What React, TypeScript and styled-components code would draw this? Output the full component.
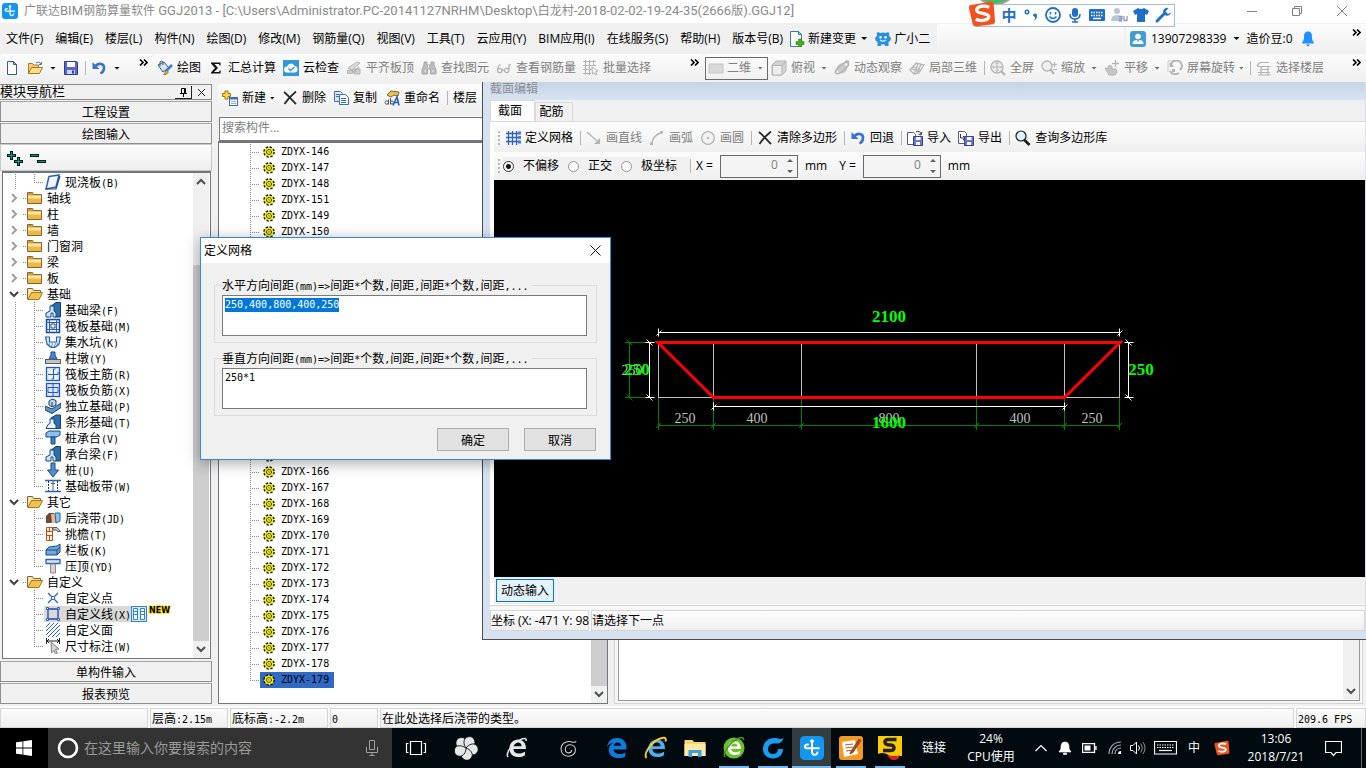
import React, { useEffect, useRef } from "react";
import styled, { createGlobalStyle, css } from "styled-components";

const ui = `"Open Sans", "Noto Sans CJK SC", sans-serif`;
const song = `"Noto Sans CJK SC", sans-serif`;
const mono = `"DejaVu Sans Mono", "Noto Sans CJK SC", monospace`;

const GlobalStyle = createGlobalStyle`
  *, *::before, *::after { box-sizing: border-box; }
  body { margin: 0; background: #f0f0f0; color: #000; font: 12px/16px ${ui}; }
  button, input, select, textarea { font: inherit; color: inherit; margin: 0; border-radius: 0; }
  button { background: none; border: 0; padding: 0; white-space: nowrap; }
  ul { list-style: none; margin: 0; padding: 0; }
  svg { display: block; flex: none; }
`;

/* ---------- icons ---------- */

const G = "#b4b4b4";
const LG = "#dcdcdc";

const icons: Record<string, React.ReactNode> = {
  app: (
    <>
      <rect width="16" height="16" rx="3" fill="#1296f0" />
      <path d="M8 3.200V10.500C8 13.500 12 13 11.600 10.400M4.500 8.200H13M5.800 5.800C3.200 5 2.200 8.200 4.600 8.200M6.800 3.800L8 2.800L9.200 3.800" stroke="#fff" strokeWidth="1.300" fill="none" />
    </>
  ),
  newFile: (
    <>
      <path d="M3.500 1.500h6l3 3v10h-9z" fill="#fff" stroke="#3d5a86" />
      <path d="M9.500 1.500v3h3z" fill="#b8cce8" stroke="#3d5a86" />
    </>
  ),
  open: (
    <>
      <path d="M1.500 13.500v-10h4l1 1.500h5v3" fill="#f3cf7a" stroke="#a87a1c" />
      <path d="M1.500 13.500l3-6h11l-3 6z" fill="#ffdf8e" stroke="#a87a1c" />
      <path d="M9 3q3-2.500 5 1m.5-2v2.500H12" fill="none" stroke="#4477b8" />
    </>
  ),
  save: (
    <>
      <path d="M1.500 1.500h12l1 1v12h-13z" fill="#5b67c8" stroke="#2f3c9a" />
      <rect x="4" y="2" width="8" height="5" fill="#fff" />
      <rect x="4" y="10" width="8" height="4" fill="#cfd6f2" />
      <rect x="9" y="10.500" width="2" height="3" fill="#2f3c9a" />
    </>
  ),
  undo: (
    <>
      <path d="M4.500 6C8 2.500 13.500 3.500 13 8.500c-.3 2.500-1.800 4-3.500 5" fill="none" stroke="#3c6fd0" strokeWidth="2.600" />
      <path d="M1.500 2v7h7z" fill="#3c6fd0" />
    </>
  ),
  paint: (
    <>
      <path d="M1 5l6-3 5 6-6 4z" fill="#d6e2f2" stroke="#3b5680" />
      <path d="M3 6V2q1-2 3 0v3" fill="none" stroke="#3b5680" />
      <path d="M15 5l-6 6" stroke="#3d7bd0" strokeWidth="2.600" />
      <path d="M9.500 10l2 2c-1 2-3 3-5 2.500 1.500-1 1.500-3 3-4.500z" fill="#e0a63c" stroke="#7c5a14" strokeWidth=".7" />
    </>
  ),
  sigma: <path d="M3 2.500h9.500v3h-1L11 4H6.500L10 8 6 12h5l.7-1.500h1L12.500 13.500H3v-1L7 8 3 3.500z" fill="#111" />,
  cloud: (
    <>
      <rect width="16" height="16" fill="#2e9bd8" />
      <path d="M4 12.500a3 3 0 010-6 4 4 0 017.500-.5 3.300 3.300 0 01.5 6.500z" fill="#fff" />
      <path d="M5.500 8.500l2 2 4-3.500" fill="none" stroke="#2e9bd8" strokeWidth="1.400" />
    </>
  ),
  align: (
    <>
      <path d="M2 8l9-6 3 1-8 7z" fill={LG} stroke={G} />
      <path d="M1.500 10.500h5v3h-5zM8 9h6v5H8z" fill="#cfcfcf" stroke={G} />
      <path d="M4 9l4 3 5-5" fill="none" stroke={G} strokeWidth="1.500" />
    </>
  ),
  binoc: (
    <>
      <path d="M3 2h3v3h4V2h3v3l2 5v4H9.500V9h-3v5H1v-4l2-5z" fill="#bcbcbc" stroke="#a8a8a8" />
      <path d="M3 11h2M11 11h2M7.500 5v3" stroke="#eee" />
    </>
  ),
  glasses: <path d="M1.500 10.500a2.200 2.200 0 104.400 0 2.200 2.200 0 10-4.400 0c0-3 1-5 3-6M8.500 10.500a2.200 2.200 0 104.400 0 2.200 2.200 0 10-4.400 0M6 10h2.500M13 10V5l2-.5" fill="none" stroke={G} strokeWidth="1.300" />,
  batch: (
    <>
      <path d="M0 1.500h13M0 5.500h13M0 9.500h9M0 13.500h8M2.500 0v15M6.500 0v15M10.500 0v6" stroke={G} />
      <path d="M9 7l6 4-2.500.7 1.500 2.800-1.500.5-1.300-2.500L9.500 14z" fill="#fff" stroke={G} />
    </>
  ),
  plane: <rect x="1" y="4" width="14" height="9" fill="#d9d9d9" stroke="#c4c4c4" />,
  cube: (
    <>
      <path d="M1 5l4-4h10v10l-4 4H1z" fill="#d2d2d2" stroke={G} />
      <path d="M1.500 5.500h9.500V15H1.500zM11 5.500L15 1" fill="#ececec" stroke={G} />
    </>
  ),
  orbit: (
    <>
      <circle cx="8" cy="8.500" r="5" fill="#c9c9c9" />
      <ellipse cx="8" cy="8" rx="8" ry="3" fill="none" stroke={G} strokeWidth="1.500" transform="rotate(-40 8 8)" />
      <path d="M11 1l3.500.5-.5 3" fill="none" stroke={G} strokeWidth="1.500" />
    </>
  ),
  local3d: <path d="M1 10l6-7 8 2-5 8-5 1zM4 7l7 3M3 9l8 3M9 3.500L5.500 13.500M12 4.500L8 13.500" fill="#eee" stroke={G} strokeWidth="1.200" />,
  full: (
    <>
      <circle cx="7" cy="7" r="6" fill="#efefef" stroke={G} strokeWidth="1.300" />
      <path d="M7 2.500v9M2.500 7h9M5.500 4L7 2.500 8.500 4M5.500 10L7 11.500 8.500 10M4 5.500L2.500 7 4 8.500M10 5.500L11.500 7 10 8.500" fill="none" stroke={G} />
      <path d="M11.500 11.500l3.500 3.500" stroke={G} strokeWidth="2.200" />
    </>
  ),
  zoom: (
    <>
      <circle cx="6" cy="6" r="5" fill="#efefef" stroke={G} strokeWidth="1.300" />
      <path d="M9.500 9.500l3.500 4.500" stroke={G} strokeWidth="2.200" />
      <path d="M13.500 2v5M11 4.500h5M12 9.500h4" stroke={G} strokeWidth="1.200" />
    </>
  ),
  pan: (
    <>
      <path d="M1 8L4 9V6.500Q6 4 8 6.500V9L12 9 13 12 11 15H5z" fill="#c6c6c6" stroke={G} />
      <path d="M11.500 0v7M8 3.500h7" stroke={G} strokeWidth="1.300" />
    </>
  ),
  rotate: (
    <>
      <path d="M1 12V1h11" fill="none" stroke="#cfcfcf" />
      <path d="M4 5a5.500 5.500 0 119 5M12 13a6 6 0 01-9-2" fill="none" stroke={G} strokeWidth="2" />
      <path d="M2.500 2v5h5zM5 9h3v3H5z" fill={G} />
    </>
  ),
  floors: <path d="M4 2.500h9M1 6l3-3.500M1 6.500h14M5 9.500h8M2 12.500h12M5 6.500v9M12 6.500v9M2 15h13" fill="none" stroke={G} strokeWidth="1.200" />,
  change: (
    <>
      <path d="M1.500.5h8l3 3v12h-11z" fill="#fff" stroke="#2d7fae" />
      <path d="M9.500.5v3h3z" fill="#b8dcf2" stroke="#2d7fae" />
      <path d="M9.500 8h3v2.500H15v3h-2.500V16h-3v-2.500H7v-3h2.500z" fill="#48b01c" stroke="#2c7d0c" strokeWidth=".6" />
    </>
  ),
  mascot: (
    <>
      <path d="M2 3.500Q1 1 3.500 1.200L5.500 2Q8 1 10.500 2L12.500 1.200Q15 1 14 3.500L14.500 5.500 16 7 15.500 9.500 13.500 11v4H10v-1.500H6V15H2.500v-4L.5 9.500 0 7l1.500-1.500z" fill="#2b8fe0" />
      <circle cx="5.500" cy="6.300" r="1.200" fill="#fff" />
      <circle cx="10.500" cy="6.300" r="1.200" fill="#fff" />
      <path d="M5 8.800q3 2.800 6 0" fill="none" stroke="#fff" strokeWidth="1.100" />
    </>
  ),
  user: (
    <>
      <rect width="16" height="16" rx="3" fill="#3f9fd0" />
      <circle cx="8" cy="5.500" r="2.800" fill="#fff" />
      <path d="M2.500 13c0-3.500 2.500-4 5.500-4s5.500.5 5.500 4z" fill="#fff" />
      <path d="M7 9l1 2.500L9 9z" fill="#3f9fd0" />
    </>
  ),
  bell: (
    <>
      <path d="M8 .5c-3.500 0-4 2.500-4 6S2 11 2 12.500h12C14 11 12 10 12 6.500S11.500.5 8 .5z" fill="#1e90ff" />
      <path d="M6 13.500h4L8 15.500z" fill="#1e6fd0" />
    </>
  ),
  create: (
    <>
      <path d="M3 1h3v2.500h2.500v3H6V9H3V6.500H.5v-3H3z" fill="#ffd84a" stroke="#9b7410" />
      <rect x="7.500" y="7.500" width="8" height="8" fill="#fff" stroke="#3f6db5" />
      <path d="M7.500 8.500h8" stroke="#3f6db5" strokeWidth="2" />
      <path d="M9 11.500h5M9 13.500h5" stroke="#8fb0dc" />
    </>
  ),
  cross: <path d="M2 2C6 5 10 10 14 14M14 1.500C9 5.500 5.500 9.500 2.500 14" fill="none" stroke="#2b2b2b" strokeWidth="1.800" />,
  copy: (
    <>
      <path d="M1.500 1.500h6l2 2v8h-8z" fill="#dce8f8" stroke="#3f6db5" />
      <path d="M6.500 4.500h6l3 3v7h-9z" fill="#f4f8fe" stroke="#3f6db5" />
      <path d="M3 4.500h3M3 6.500h3M8 8.500h5M8 10.500h5M8 12.500h5" stroke="#3f6db5" />
    </>
  ),
  rename: (
    <>
      <path d="M3 5l4-4 8 1-1 4-4-1-3 2z" fill="#f0c050" stroke="#6f6a3c" />
      <path d="M4.500 9.500v5M4.500 12.500a1.700 1.700 0 11-3.400 0 1.700 1.700 0 013.400 0M6.500 8v6.500M6.500 12.500a1.500 1.500 0 103 0 1.500 1.500 0 00-3 0" fill="none" stroke="#555" />
      <path d="M9 15.500L13 7l2 8.500M10.500 12.500h4" fill="none" stroke="#2a5fc8" strokeWidth="1.600" />
    </>
  ),
  grid: (
    <>
      <path d="M3.500 1v14M7.500 1v14M11.500 1v14M1 3.500h14M1 7.500h14M1 11.500h14" stroke="#2f5fb8" strokeWidth="1.300" />
      <path d="M13 1.500h3v3h-3zM13 6h3v3h-3zM13 10.500h3v3h-3z" fill="#3f7fe0" />
    </>
  ),
  line: (
    <>
      <path d="M1 2l11 10" stroke={G} strokeWidth="1.300" />
      <path d="M14 8v6H8z" fill={G} />
    </>
  ),
  arc: (
    <>
      <path d="M3 13C4 7 7 4 13 2.500" fill="none" stroke={G} strokeWidth="1.400" />
      <path d="M1 12.500h3v2.500H1zM11.500 1h2.500v2.500h-2.500z" fill={G} />
    </>
  ),
  circle: (
    <>
      <circle cx="8" cy="8" r="6.300" fill="#f2f2f2" stroke={G} strokeWidth="1.300" />
      <rect x="7" y="7" width="2" height="2" fill={G} />
    </>
  ),
  importI: (
    <>
      <path d="M.5 2.500h6l2 2v10h-8z" fill="#fff" stroke="#4a5f8a" />
      <path d="M9 2q4-2 5 2m1-2l-1 3-2.500-1" fill="none" stroke="#333" />
      <path d="M6.500 6.500h9v9h-9z" fill="#6a76cc" stroke="#38418e" />
      <path d="M9 7h4.500v3H9zM9 12h4v3H9z" fill="#fff" />
    </>
  ),
  exportI: (
    <>
      <path d="M.5 1.500h6l2 2v10h-8z" fill="#fff" stroke="#4a5f8a" />
      <path d="M2.500 4v4h4m-1.500-2l2 2-2 2" fill="none" stroke="#333" />
      <path d="M6.500 6.500h9v9h-9z" fill="#6a76cc" stroke="#38418e" />
      <path d="M9 7h4.500v3H9zM9 12h4v3H9z" fill="#fff" />
    </>
  ),
  search: (
    <>
      <circle cx="6" cy="6" r="5" fill="#dff2fb" stroke="#1a1a1a" strokeWidth="1.200" />
      <path d="M9.500 10l5 5" stroke="#1a1a1a" strokeWidth="2.600" />
    </>
  ),
  folder: (
    <>
      <path d="M.5 13.500v-11h5l1 2h8v9z" fill="#d99a26" stroke="#7c6a35" />
      <path d="M1 5.500h13v7.500H1z" fill="#f0b840" />
      <path d="M1 5.500h13v3H1z" fill="#fde6a8" />
    </>
  ),
  folderOpen: (
    <>
      <path d="M.5 13.500v-11h5l1 2h7v3" fill="#fbe3a4" stroke="#7c6a35" />
      <path d="M1 13.500l3.500-7h11l-3.500 7z" fill="#f5c14e" stroke="#a27a26" />
    </>
  ),
  slab: (
    <>
      <path d="M4 2.500l10-1.500-3 12-10 2z" fill="#f1f7ff" stroke="#2c62b4" strokeWidth="1.500" />
      <path d="M1 15h10l4-13" fill="none" stroke="#174a8c" strokeWidth="1.200" />
    </>
  ),
  beam: (
    <>
      <path d="M6 4l5-3.500h4.500V15H10z" fill="#2f6fa8" stroke="#123f6c" />
      <path d="M1 15v-4l4-2V4h4v5l2 2v4H8v-4H6v4z" fill="#cfe6f8" stroke="#174a80" />
    </>
  ),
  raft: (
    <>
      <rect x="1.500" y="1.500" width="13" height="13" fill="#e9f2ff" stroke="#174a9c" strokeWidth="1.500" />
      <path d="M4.500 1v14M11.500 1v14M1 4.500h14M1 11.500h14" stroke="#2c62b4" />
      <path d="M6 6h4v4H6z" fill="#fff" stroke="#174a9c" />
    </>
  ),
  pit: (
    <>
      <path d="M.5 3h4v5h7V3h4l-1.500 7q-6 7-12 0z" fill="#d9ebfb" stroke="#2c62b4" strokeWidth="1.200" />
      <path d="M4 10h1M7 10h1M10 10h1M6 12h1M9 12h1M12 10h1" stroke="#2c62b4" />
    </>
  ),
  pier: (
    <>
      <path d="M6 2h4v3l2 4H4l2-4z" fill="#4d86d0" stroke="#1d4f9c" />
      <rect x=".5" y="9.500" width="15" height="4" fill="#c4c4c4" stroke="#5c5c5c" />
    </>
  ),
  barMain: (
    <>
      <rect x="1.500" y="1.500" width="13" height="13" fill="#e6f0ff" stroke="#2357c0" strokeWidth="1.300" />
      <path d="M8.500 3v10h-2M3 8.500h10V6M8.500 3h2" fill="none" stroke="#2357c0" />
    </>
  ),
  barNeg: (
    <>
      <rect x="1.500" y="1.500" width="13" height="13" fill="#dbe8fb" stroke="#2357c0" strokeWidth="1.300" />
      <path d="M8 1v14M3 5.500h10v2M3 10.500h10V8M3 5.500v2M3 10.500V8" fill="none" stroke="#2357c0" />
    </>
  ),
  pad: (
    <>
      <path d="M0 8l7 3 9-6v4.500L7 15.500 0 12z" fill="#5d97cc" stroke="#123f6c" />
      <path d="M4 7V3l3-2 4 1.500V7L7 9z" fill="#bcd9f0" stroke="#123f6c" />
      <path d="M7 9V4" stroke="#123f6c" />
    </>
  ),
  strip: (
    <>
      <path d="M6 4l5-3h4.500v13.500H10z" fill="#2f6fa8" stroke="#123f6c" />
      <path d="M1 14.500l2-4 2-1V5h4v4.500l2 1v4z" fill="#eaf5ff" stroke="#174a80" />
    </>
  ),
  cap: (
    <>
      <path d="M1 3l3-2h11v4l-3 2H1z" fill="#8fc0ec" stroke="#174a80" />
      <path d="M6 7h4v7H6z" fill="#3f7fc0" stroke="#174a80" />
    </>
  ),
  pile: <path d="M6 1h4v7h3.500L8 15 2.500 8H6z" fill="#4f8fd0" stroke="#174a80" />,
  band: (
    <>
      <path d="M0 2.500h16M0 13.500h16" stroke="#2c62b4" strokeWidth="1.500" />
      <path d="M3.500 3v10M12.500 3v10" stroke="#333" strokeDasharray="2 1" />
      <path d="M8 3v10M6 5.500h4" stroke="#2c62b4" />
    </>
  ),
  pour: (
    <>
      <path d="M1 6l3-3h5v8l-3 2H1z" fill="#6b4a34" />
      <path d="M6 4h6v9H7z" fill="#e7b98c" />
      <path d="M10 3h5v8l-4 2z" fill="#8fc0ec" stroke="#2c5f9c" />
    </>
  ),
  eaves: (
    <>
      <path d="M1.500 1.500h6v13h-6zM1.500 5.500h6M1.500 9.500h6M4.500 1.500v4M4.500 9.500v5" fill="#fff2e4" stroke="#b5531c" />
      <path d="M8 1.500h4l3.500 4-3 0-1-1.500H8z" fill="#ccc" stroke="#555" />
    </>
  ),
  board: (
    <>
      <path d="M1 8l3-3 8-1 3-2v8l-3 3H1z" fill="#6ea9da" stroke="#174a80" />
      <path d="M1 8h11l3-3M12 8v5" fill="none" stroke="#174a80" />
    </>
  ),
  coping: (
    <>
      <path d="M1 1.500h14v4H1z" fill="#d9ebfb" stroke="#2c62b4" strokeWidth="1.300" />
      <path d="M5.500 6h5v9h-5z" fill="#d6d6d6" stroke="#8a8a8a" />
    </>
  ),
  point: (
    <>
      <path d="M3 3l3.500 3.500M13 3L9.500 6.500M3 13l3.500-3.500M13 13L9.500 9.500" stroke="#2060c0" strokeWidth="1.200" />
      <path d="M6.500 6.500h3v3h-3z" fill="#fff" stroke="#2060c0" />
    </>
  ),
  poly: (
    <>
      <path d="M3 3h10v10H3z" fill="none" stroke="#1b4aa8" strokeWidth="1.300" />
      <path d="M1.500 1.500h2v2h-2zM12.500 1.500h2v2h-2zM1.500 12.500h2v2h-2zM12.500 12.500h2v2h-2z" fill="#fff" stroke="#2060c0" />
    </>
  ),
  face: <path d="M1 5l4-4M1 9l8-8M1 13l12-12M3 15L15 3M7 15l8-8M11 15l4-4" stroke="#2060c0" />,
  measure: (
    <>
      <path d="M1.500 0v6M14.500 0v6M1 3h14M4 1L2 3l2 2M12 1l2 2-2 2" fill="none" stroke="#222" />
      <path d="M6 4l8 7-3.500.5 2 3.500-2 .8L9 12.500 6.500 15z" fill="#d4d4d4" stroke="#808080" />
    </>
  ),
  book: (
    <>
      <rect x=".5" y=".5" width="15" height="15" fill="#d9ecff" stroke="#2b86d8" />
      <path d="M2.500 2.500h4v11h-4zM9.500 2.500h4v11h-4zM3 5.500h3M3 8.500h3M10 5.500h3M10 8.500h3" fill="#fff" stroke="#2b86d8" />
    </>
  ),
};

const Icon = ({ name, size = 16 }: { name: string; size?: number }) => (
  <svg width={size} height={size} viewBox="0 0 16 16" aria-hidden="true">
    {icons[name]}
  </svg>
);

const GearIcon = () => (
  <svg width="12" height="12" viewBox="0 0 12 12" aria-hidden="true">
    <circle cx="6" cy="6" r="5" fill="#f5ee10" />
    <circle cx="6" cy="6" r="5.100" fill="none" stroke="#111" strokeWidth="1.400" strokeDasharray="2.400 1.600" />
    <circle cx="6" cy="6" r="2.500" fill="none" stroke="#111" strokeDasharray="1.500 .5" />
    <rect x="5.500" y="5.500" width="1" height="1" fill="#111" />
  </svg>
);

const Chevron = ({ d, color = "#505050" }: { d: string; color?: string }) => (
  <svg width="10" height="10" viewBox="0 0 10 10" aria-hidden="true">
    <path d={d} fill="none" stroke={color} strokeWidth="2" />
  </svg>
);
const UP = "M1 7l4-4 4 4";
const DOWN = "M1 3l4 4 4-4";
const RIGHT = "M3 1l4 4-4 4";

/* ---------- text mixing full width and half width runs ---------- */

const Half = styled.span`
  font-family: ${mono};
  font-size: 10px;
  line-height: 0;
`;
const Wide = styled.span`
  font-family: Roboto, sans-serif;
  font-size: 13px;
  line-height: 0;
`;

const Mixed = ({ text, as: Run = Half }: { text: string; as?: React.ElementType }) => (
  <>
    {text
      .split(/([\x20-\x7e]+)/)
      .filter(Boolean)
      .map((run, i) => (/^[\x20-\x7e]/.test(run) ? <Run key={i}>{run}</Run> : run))}
  </>
);

/* ---------- shell ---------- */

const Shell = styled.div`
  position: relative;
  height: 100vh;
  display: flex;
  flex-direction: column;
  overflow: hidden;
`;

const TitleBar = styled.header`
  height: 23px;
  flex: none;
  display: flex;
  align-items: center;
  padding: 0 2px 1px;
  background: #fff;
  color: #8a8a8a;
`;
const TitleText = styled.h1`
  margin: 0 0 0 6px;
  flex: 1;
  font: inherit;
  white-space: pre;
`;
const Caption = styled.button`
  width: 45px;
  display: flex;
  justify-content: center;
`;

const soft = css`
  background: linear-gradient(#fcfcfc, #efefef);
`;

const MenuBar = styled.nav`
  height: 31px;
  flex: none;
  display: flex;
  align-items: center;
  padding-left: 6px;
`;
const MenuItem = styled.button<{ $gap?: number }>`
  display: flex;
  align-items: center;
  gap: 3px;
  margin-right: ${(p) => p.$gap ?? 12}px;
`;
const MenuBlank = styled.div`
  flex: 1;
  height: 30px;
  border-radius: 3px;
  ${soft}
`;
const Account = styled.div`
  width: 240px;
  height: 30px;
  display: flex;
  align-items: center;
  gap: 5px;
  padding-left: 4px;
  margin-left: 2px;
  ${soft}
`;
const Beans = styled.span`
  margin: 0 2px;
`;

const Bar = styled.div`
  height: 28px;
  flex: none;
  display: flex;
  overflow: hidden;
`;
const Group = styled.div<{ $w?: number }>`
  display: flex;
  align-items: center;
  padding-left: 4px;
  border-radius: 3px;
  ${(p) => (p.$w ? `width: ${p.$w}px; flex: none;` : "flex: 1;")}
  ${soft}
`;
const ViewGroup = styled(Group)`
  padding-left: 1px;
`;
const ToolBtn = styled.button<{ $off?: boolean }>`
  display: flex;
  align-items: center;
  gap: 4px;
  margin-right: 7px;
  flex: none;
  color: ${(p) => (p.$off ? "#808080" : "#000")};
`;
const Sep = styled.i`
  width: 1px;
  height: 14px;
  flex: none;
  margin-right: 5px;
  background: #b4b4b4;
`;
const Caret = styled.i<{ $w?: number; $off?: boolean }>`
  width: ${(p) => (p.$w ?? 12) - 4}px;
  height: 3px;
  flex: none;
  background: ${(p) => (p.$off ? "#6e6e6e" : "#111")};
  clip-path: ${(p) => ((p.$w ?? 12) > 9 ? "polygon(2px 0, 8px 0, 5px 3px)" : "polygon(0 0, 5px 0, 2px 3px)")};
`;
const QuickCaret = styled(Caret)`
  margin-right: 7px;
`;
const MoreGlyph = styled.button`
  width: 10px;
  height: 10px;
  margin: 0 4px 12px auto;
`;
const More = ({ label }: { label: string }) => (
  <MoreGlyph aria-label={label}>
    <svg width="9" height="7" viewBox="0 0 9 7">
      <path d="M1 .5l3 3-3 3M5 .5l3 3-3 3" fill="none" stroke="#000" strokeWidth="1.600" />
    </svg>
  </MoreGlyph>
);

const ViewPick = styled.label`
  width: 63px;
  height: 23px;
  flex: none;
  display: flex;
  align-items: center;
  gap: 3px;
  margin-right: 3px;
  padding: 0 4px 0 2px;
  border: 1px solid #6a6a6a;
  color: #808080;
`;
const PlainSelect = styled.select`
  width: 30px;
  appearance: none;
  border: 0;
  padding: 0;
  background: none;
`;

const Tool = ({ icon, text, off, caret }: { icon: string; text: string; off?: boolean; caret?: number }) => (
  <ToolBtn $off={off}>
    <Icon name={icon} />
    {text}
    {caret && <Caret $w={caret} $off={off} />}
  </ToolBtn>
);

const Main = styled.main`
  position: relative;
  flex: 1;
  min-height: 0;
  display: flex;
  padding: 2px 0;
`;

/* ---------- navigation column ---------- */

const Side = styled.aside`
  width: 212px;
  flex: none;
  display: flex;
  flex-direction: column;
`;
const SideHead = styled.div`
  height: 16px;
  flex: none;
  display: flex;
  align-items: center;
  border: 1px solid #8a8a8a;
  border-left: 0;
  font: 13px/13px ${song};
`;
const SideTitle = styled.h2`
  margin: 0;
  flex: 1;
  padding-bottom: 4px;
  font: inherit;
`;
const HeadBtn = styled.button<{ $edge?: boolean }>`
  width: 17px;
  height: 13px;
  display: flex;
  align-items: center;
  justify-content: center;
  margin-right: 1px;
  border: solid #222;
  border-width: ${(p) => (p.$edge ? "0 1px 1px 0" : "0")};
`;
const SideTab = styled.button`
  height: 21px;
  flex: none;
  margin-top: 1px;
  border: 1px solid #8f8f8f;
  border-top-color: #a8a8a8;
  font-family: ${song};
  background: #f0f0f0;
`;
const SideTools = styled.div`
  height: 27px;
  flex: none;
  display: flex;
  align-items: center;
  gap: 5px;
  padding-left: 6px;
  border: 1px solid #c8c8c8;
  ${soft}
`;
const TreeBox = styled.div`
  flex: 1;
  min-height: 0;
  display: flex;
  margin: 0 1px 1px 2px;
  padding-right: 1px;
  border: 1px solid #70757e;
  border-width: 2px 1px 1px;
  background: #fff;
  overflow: hidden;
`;
const Tree = styled.ul`
  flex: 1;
  padding-top: 1px;
  font-family: ${song};
`;
const Branch = styled.li`
  height: 16px;
  display: flex;
  align-items: center;
  white-space: nowrap;
`;
const Trunk = styled.i<{ $on?: boolean }>`
  width: 19px;
  height: 16px;
  flex: none;
  margin-left: 12px;
  background: repeating-linear-gradient(#8a8a8a 0 1px, transparent 1px 2px) no-repeat 0 0 / 1px ${(p) => (p.$on ? "100%" : "0")};
`;
const Elbow = styled.i<{ $last?: boolean }>`
  width: 10px;
  height: 16px;
  flex: none;
  background:
    repeating-linear-gradient(#8a8a8a 0 1px, transparent 1px 2px) no-repeat 0 0 / 1px ${(p) => (p.$last ? "50%" : "100%")},
    repeating-linear-gradient(90deg, #8a8a8a 0 1px, transparent 1px 2px) no-repeat 0 8px / 100% 1px;
`;
const Leaf = styled.span<{ $sel?: boolean }>`
  height: 16px;
  display: flex;
  align-items: center;
  gap: 4px;
  padding-left: 1px;
  background: ${(p) => (p.$sel ? "#d9d9d9" : "none")};
`;
const Twig = styled.i`
  width: 4px;
  height: 1px;
  flex: none;
  margin-left: 4px;
  background: repeating-linear-gradient(90deg, #8a8a8a 0 1px, transparent 1px 2px);
`;
const FolderRow = styled(Branch)`
  padding-left: 6px;
`;
const FolderName = styled.span`
  margin-left: 4px;
`;
const NewTag = styled.b`
  align-self: flex-start;
  margin-left: 2px;
  font: bold 8px/9px "DejaVu Sans", sans-serif;
  text-shadow: 1px 0 #ffe000, -1px 0 #ffe000, 0 1px #ffe000, 0 -1px #ffe000, 1px 1px #ffe000;
`;
const Scroll = styled.div<{ $before: number }>`
  width: 16px;
  flex: none;
  display: flex;
  flex-direction: column;
  align-items: center;
  justify-content: space-between;
  padding: 4px 0;
  background: linear-gradient(#cdcdcd, #cdcdcd) no-repeat 0 ${(p) => p.$before}px / 100% calc(100% - ${(p) => p.$before + 17}px) #f0f0f0;
`;

type Node = { t: string; kids?: [string, string][] };
const nodes: Node[] = [
  { t: "轴线" },
  { t: "柱" },
  { t: "墙" },
  { t: "门窗洞" },
  { t: "梁" },
  { t: "板" },
  {
    t: "基础",
    kids: [
      ["beam", "基础梁(F)"],
      ["raft", "筏板基础(M)"],
      ["pit", "集水坑(K)"],
      ["pier", "柱墩(Y)"],
      ["barMain", "筏板主筋(R)"],
      ["barNeg", "筏板负筋(X)"],
      ["pad", "独立基础(P)"],
      ["strip", "条形基础(T)"],
      ["cap", "桩承台(V)"],
      ["beam", "承台梁(F)"],
      ["pile", "桩(U)"],
      ["band", "基础板带(W)"],
    ],
  },
  {
    t: "其它",
    kids: [
      ["pour", "后浇带(JD)"],
      ["eaves", "挑檐(T)"],
      ["board", "栏板(K)"],
      ["coping", "压顶(YD)"],
    ],
  },
  {
    t: "自定义",
    kids: [
      ["point", "自定义点"],
      ["poly", "自定义线(X)"],
      ["face", "自定义面"],
      ["measure", "尺寸标注(W)"],
    ],
  },
];

const TreeLeaf = ({ icon, text, trunk, last }: { icon: string; text: string; trunk: boolean; last: boolean }) => {
  const selected = icon === "poly";
  return (
    <Branch>
      <Trunk $on={trunk} />
      <Elbow $last={last} />
      <Leaf $sel={selected}>
        <Icon name={icon} />
        <span>
          <Mixed text={text} />
        </span>
      </Leaf>
      {selected && (
        <>
          <Icon name="book" />
          <NewTag>NEW</NewTag>
        </>
      )}
    </Branch>
  );
};

const Navigation = () => (
  <Side>
    <SideHead>
      <SideTitle>模块导航栏</SideTitle>
      <HeadBtn $edge aria-label="固定">
        <svg width="9" height="10" viewBox="0 0 9 10">
          <path d="M1 6.500h7M2.500 6V1.500h4V6M4.500 7v3M5.500 1v5" stroke="#000" fill="none" />
        </svg>
      </HeadBtn>
      <HeadBtn aria-label="关闭面板">
        <svg width="9" height="9" viewBox="0 0 9 9">
          <path d="M1 1l7 7M8 1L1 8" stroke="#222" fill="none" />
        </svg>
      </HeadBtn>
    </SideHead>
    <SideTab>工程设置</SideTab>
    <SideTab>绘图输入</SideTab>
    <SideTools>
      <button aria-label="全部展开">
        <svg width="18" height="16" viewBox="0 0 18 16">
          <path d="M4.500 1v9M0 5.500h9M11.500 7v9M7 11.500h9" stroke="#001818" strokeWidth="3" />
          <path d="M4.500 2v7M1 5.500h7M11.500 8v7M8 11.500h7" stroke="#00a08c" />
        </svg>
      </button>
      <button aria-label="全部折叠">
        <svg width="18" height="16" viewBox="0 0 18 16">
          <path d="M0 5.500h9M7 11.500h9" stroke="#001818" strokeWidth="3" />
          <path d="M1 5.500h7M8 11.500h7" stroke="#00a08c" />
        </svg>
      </button>
    </SideTools>
    <TreeBox>
      <Tree>
        <TreeLeaf icon="slab" text="现浇板(B)" trunk last />
        {nodes.map((n, i) => (
          <React.Fragment key={n.t}>
            <FolderRow>
              <Chevron d={n.kids ? DOWN : RIGHT} color={n.kids ? "#404040" : "#a0a0a0"} />
              <Twig />
              <Icon name={n.kids ? "folderOpen" : "folder"} />
              <FolderName>{n.t}</FolderName>
            </FolderRow>
            {n.kids?.map(([icon, text], k) => (
              <TreeLeaf key={text} icon={icon} text={text} trunk={i < nodes.length - 1} last={k === n.kids!.length - 1} />
            ))}
          </React.Fragment>
        ))}
      </Tree>
      <Scroll $before={92}>
        <Chevron d={UP} />
        <Chevron d={DOWN} />
      </Scroll>
    </TreeBox>
    <SideTab>单构件输入</SideTab>
    <SideTab>报表预览</SideTab>
  </Side>
);

/* ---------- component list ---------- */

const ListCol = styled.section`
  width: 390px;
  flex: none;
  display: flex;
  flex-direction: column;
  margin-left: 6px;
`;
const SearchBox = styled.input`
  height: 24px;
  flex: none;
  margin: 5px 0 0 1px;
  padding: 0 3px 4px 2px;
  border: 1px solid #7a7a7a;
  outline: 0;
  background: #fff;
  &::placeholder {
    color: #808080;
    opacity: 1;
  }
`;
const ListBox = styled(TreeBox)`
  margin: 0;
  padding-right: 0;
`;
const Items = styled.ul`
  flex: 1;
  padding: 1px 0 0 31px;
`;
const Entry = styled.span<{ $sel?: boolean }>`
  height: 16px;
  display: flex;
  align-items: center;
  gap: 6px;
  padding: 0 5px 0 3px;
  font: 10px/16px ${mono};
  background: ${(p) => (p.$sel ? "#316ac5" : "none")};
`;
const names = [146, 147, 148, 151, 149, 150, ...Array.from({ length: 28 }, (_, i) => 152 + i)];

const ComponentList = () => (
  <ListCol>
    <Bar>
      <Group>
        <Tool icon="create" text="新建" caret={9} />
        <Tool icon="cross" text="删除" />
        <Tool icon="copy" text="复制" />
        <Tool icon="rename" text="重命名" />
        <Sep />
        <button>楼层</button>
      </Group>
    </Bar>
    <SearchBox placeholder="搜索构件..." aria-label="搜索构件" />
    <ListBox>
      <Items>
        {names.map((n) => (
          <Branch key={n}>
            <Elbow $last={n === 179} />
            <Entry $sel={n === 179}>
              <GearIcon />
              {`ZDYX-${n}`}
            </Entry>
          </Branch>
        ))}
      </Items>
      <Scroll $before={40}>
        <Chevron d={UP} />
        <Chevron d={DOWN} />
      </Scroll>
    </ListBox>
  </ListCol>
);

const Backdrop = styled.section`
  flex: 1;
  display: flex;
  margin: 0 3px 0 6px;
  padding: 3px 2px 2px 3px;
  border: 1px solid #d4d4d4;
  background: #f6f6f6;
`;
const BackdropPane = styled.div`
  flex: 1;
  display: flex;
  justify-content: flex-end;
  border: 1px solid #9a9a9e;
  background: #fff;
`;
const Track = styled.div`
  width: 16px;
  display: flex;
  align-items: flex-end;
  justify-content: center;
  padding-bottom: 4px;
  background: #f0f0f0;
`;

/* ---------- section editor window ---------- */

const Editor = styled.section`
  position: absolute;
  left: 482px;
  right: 0;
  top: 0;
  bottom: 66px;
  display: flex;
  flex-direction: column;
  padding: 0 1px 8px 7px;
  border: solid #4c4c50;
  border-width: 0 0 1px 1px;
  background: #d6e2f0;
`;
const EditorTitle = styled.h2`
  height: 18px;
  flex: none;
  margin: 0;
  font: 12px/13px ${ui};
  color: #8c8f94;
  background: linear-gradient(#c6d3e3, #d8e4f2);
`;
const Tabs = styled.div`
  height: 22px;
  flex: none;
  display: flex;
  align-items: flex-end;
  border-bottom: 1px solid #dadada;
  background: #f0f0f0;
`;
const Tab = styled.button<{ $on?: boolean }>`
  width: ${(p) => (p.$on ? 45 : 38)}px;
  height: ${(p) => (p.$on ? 21 : 19)}px;
  padding-right: 5px;
  border: 1px solid #d9d9d9;
  border-bottom: 0;
  background: ${(p) => (p.$on ? "#fff" : "#f0f0f0")};
`;
const Page = styled.div`
  flex: 1;
  min-height: 0;
  display: flex;
  flex-direction: column;
  padding: 2px 0 1px 4px;
  border-bottom: 1px solid #d4d4d4;
  background: #fff;
`;
const EditBar = styled.div`
  height: 28px;
  flex: none;
  display: flex;
  align-items: center;
  padding-left: 4px;
  white-space: nowrap;
  ${soft}
`;
const Grip = styled.i<{ $gap: number }>`
  width: 2px;
  height: 14px;
  flex: none;
  margin-right: ${(p) => p.$gap}px;
  background: repeating-linear-gradient(#b8b8b8 0 2px, transparent 2px 4px);
`;
const Radios = styled.div`
  width: 187px;
  height: 18px;
  flex: none;
  display: flex;
  align-items: center;
  background: #f0f0f0;
`;
const RadioLabel = styled.label`
  display: flex;
  align-items: center;
  gap: 9px;
  margin-right: 9px;
`;
const Radio = styled.input`
  width: 11px;
  height: 11px;
  appearance: none;
  border: 1px solid #909090;
  border-radius: 50%;
  background: #fff;
  &:checked {
    border-color: #333;
    background: radial-gradient(#111 0 2px, #fff 3px);
  }
`;
const Offset = styled.label`
  display: flex;
  align-items: center;
  gap: 7px;
  margin-right: 12px;
`;
const Spin = styled.span`
  width: 78px;
  height: 23px;
  display: flex;
  align-items: center;
  border: 1px solid #6a6a6a;
  background: #f4f4f4;
`;
const SpinInput = styled.input`
  flex: 1;
  min-width: 0;
  border: 0;
  outline: 0;
  padding: 0 5px 2px 0;
  text-align: right;
  color: #808080;
  background: none;
`;
const SpinIcon = () => (
  <svg width="14" height="20" viewBox="0 0 14 20" aria-hidden="true">
    <path d="M4 6l3-3 3 3zM4 14l3 3 3-3z" fill="#606060" />
  </svg>
);
const Canvas = styled.div`
  flex: 1;
  min-height: 0;
  background: #000;
  overflow: hidden;
`;
const EditFoot = styled.div`
  height: 27px;
  flex: none;
  padding: 2px;
  background: #f0f0f0;
`;
const DynBtn = styled.button`
  width: 58px;
  height: 23px;
  border: 1px solid #0078d7;
  background: #e5f1fb;
`;
const StatusRow = styled.div`
  height: 22px;
  flex: none;
  display: flex;
  gap: 2px;
  background: #f0f0f0;
`;
const Cell = styled.div<{ $w?: number }>`
  ${(p) => (p.$w ? `width: ${p.$w}px; flex: none;` : "flex: 1; min-width: 0;")}
  height: 20px;
  padding: 1px;
  border: 1px solid #d6d6d6;
  white-space: nowrap;
  ${soft}
`;
const SongCell = styled(Cell)`
  font-family: ${song};
`;

const EditStatus = styled(StatusRow)`
  padding-top: 4px;
  height: 25px;
  background: #f8f8f8;
`;
const EditCell = styled(Cell)`
  height: 21px;
  padding: 2px 0 0;
`;

const DimV = ({ x, color }: { x: number; color: string }) => (
  <path d={`M${x} 0.500V55.500M${x - 4} 0.500h9M${x - 4} 55.500h9M${x - 3} -2.500l6 6M${x - 3} 52.500l6 6`} stroke={color} fill="none" />
);
const DimH = ({ a, b, y, color }: { a: number; b: number; y: number; color: string }) => (
  <path d={`M${a} ${y}H${b}M${a} ${y - 4}v8M${b} ${y - 4}v8M${a - 2} ${y + 3}l5 -5M${b - 2} ${y + 3}l5 -5`} stroke={color} fill="none" />
);
const stations = [0, 55, 143, 318, 406, 461];
const spans: [number, string][] = [
  [27, "250"],
  [99, "400"],
  [231, "800"],
  [362, "400"],
  [434, "250"],
];

const Drawing = () => (
  <svg width="100%" height="100%" role="img" aria-label="截面图">
    <g transform="translate(164 162)">
      <g fill="none" stroke="#c0c0c0">
        {stations.map((x) => (
          <path key={x} d={`M${x + 0.5} 0V56`} />
        ))}
        <path d="M0 55.500h461" />
      </g>
      <g fill="none" stroke="#008000">
        {stations.map((x) => (
          <path key={x} d={`M${x + 0.5} 56V88M${x - 2} 86l5-5`} />
        ))}
        <path d="M0 83.500h461M-33 .5h29M-33 55.500h29" />
      </g>
      <DimV x={-28.5} color="#008000" />
      <g fontFamily="Liberation Serif, serif" fontSize="14" fill="#c0c0c0" textAnchor="middle">
        {spans.map(([x, t]) => (
          <text key={x} x={x} y="81">
            {t}
          </text>
        ))}
        <text x="-26" y="33">
          250
        </text>
      </g>
      <DimV x={-8.5} color="#fff" />
      <DimV x={470.5} color="#fff" />
      <DimH a={0.5} b={461.5} y={-9.5} color="#fff" />
      <DimH a={55.5} b={406.5} y={64.5} color="#fff" />
      <path d="M0 .5H462L406.500 55.500H55.500z" fill="none" stroke="#f00" strokeWidth="3" />
      <g fontFamily="Liberation Serif, serif" fontSize="17" fontWeight="bold" fill="#0f0" textAnchor="middle">
        <text x="231" y="-20">
          2100
        </text>
        <text x="231" y="86">
          1600
        </text>
        <text x="-21" y="33">
          250
        </text>
        <text x="483" y="33">
          250
        </text>
      </g>
    </g>
  </svg>
);

const SectionEditor = () => (
  <Editor>
    <EditorTitle>截面编辑</EditorTitle>
    <Tabs>
      <Tab $on>截面</Tab>
      <Tab>配筋</Tab>
    </Tabs>
    <Page>
      <EditBar>
        <Grip $gap={5} />
        <Tool icon="grid" text="定义网格" />
        <Sep />
        <Tool icon="line" text="画直线" off />
        <Tool icon="arc" text="画弧" off />
        <Tool icon="circle" text="画圆" off />
        <Sep />
        <Tool icon="cross" text="清除多边形" />
        <Sep />
        <Tool icon="undo" text="回退" />
        <Sep />
        <Tool icon="importI" text="导入" />
        <Tool icon="exportI" text="导出" />
        <Sep />
        <Tool icon="search" text="查询多边形库" />
      </EditBar>
      <EditBar>
        <Grip $gap={3} />
        <Radios>
          <RadioLabel>
            <Radio type="radio" name="offset" defaultChecked />
            不偏移
          </RadioLabel>
          <RadioLabel>
            <Radio type="radio" name="offset" />
            正交
          </RadioLabel>
          <RadioLabel>
            <Radio type="radio" name="offset" />
            极坐标
          </RadioLabel>
        </Radios>
        <Sep />
        <Offset>
          X =
          <Spin>
            <SpinInput defaultValue="0" />
            <SpinIcon />
          </Spin>
          mm
        </Offset>
        <Offset>
          Y =
          <Spin>
            <SpinInput defaultValue="0" />
            <SpinIcon />
          </Spin>
          mm
        </Offset>
      </EditBar>
      <Canvas>
        <Drawing />
      </Canvas>
      <EditFoot>
        <DynBtn>动态输入</DynBtn>
      </EditFoot>
    </Page>
    <EditStatus>
      <EditCell $w={99}>坐标 (X: -471 Y: 98</EditCell>
      <EditCell>请选择下一点</EditCell>
    </EditStatus>
  </Editor>
);

/* ---------- grid dialog ---------- */

const Dialog = styled.div`
  position: absolute;
  left: 200px;
  top: 237px;
  width: 411px;
  border: 1px solid #2f8be6;
  background: #f0f0f0;
  box-shadow: 0 3px 14px rgba(0, 0, 0, 0.35);
`;
const DialogHead = styled.div`
  height: 25px;
  display: flex;
  align-items: center;
  justify-content: space-between;
  padding: 0 9px 0 3px;
  background: #fff;
`;
const DialogTitle = styled.h2`
  margin: 0;
  font: inherit;
`;
const DialogBody = styled.div`
  display: flex;
  flex-direction: column;
  gap: 7px;
  padding: 14px 13px 8px;
  font-family: ${song};
`;
const Fields = styled.fieldset`
  min-width: 0;
  margin: 0;
  padding: 2px 9px 6px 7px;
  border: 1px solid #dcdcdc;
`;
const Legend = styled.legend`
  height: 16px;
  padding: 0 4px 0 0;
  white-space: nowrap;
`;
const Spacing = styled.textarea`
  display: block;
  width: 100%;
  height: 41px;
  padding: 2px;
  border: 1px solid #7a7a7a;
  outline: 0;
  resize: none;
  font: 10px/14px ${mono};
  background: #fff;
  &::selection {
    color: #fff;
    background: #0078d7;
  }
`;
const Actions = styled.div`
  display: flex;
  justify-content: flex-end;
  gap: 15px;
  padding: 5px 1px 0 0;
`;
const Push = styled.button`
  width: 72px;
  height: 23px;
  border: 1px solid #adadad;
  background: #e1e1e1;
`;

const GridDialog = () => {
  const first = useRef<HTMLTextAreaElement>(null);
  useEffect(() => {
    first.current?.focus();
    first.current?.select();
  }, []);
  return (
    <Dialog role="dialog" aria-labelledby="grid-title">
      <DialogHead>
        <DialogTitle id="grid-title">定义网格</DialogTitle>
        <button aria-label="关闭">
          <svg width="11" height="11" viewBox="0 0 11 11">
            <path d="M.5.5l10 10M10.500.5l-10 10" stroke="#111" fill="none" />
          </svg>
        </button>
      </DialogHead>
      <DialogBody>
        <Fields>
          <Legend id="h-gap">
            <Mixed text="水平方向间距(mm)=>间距*个数,间距,间距*个数,间距,..." />
          </Legend>
          <Spacing ref={first} aria-labelledby="h-gap" spellCheck={false} defaultValue="250,400,800,400,250" />
        </Fields>
        <Fields>
          <Legend id="v-gap">
            <Mixed text="垂直方向间距(mm)=>间距*个数,间距,间距*个数,间距,..." />
          </Legend>
          <Spacing aria-labelledby="v-gap" spellCheck={false} defaultValue="250*1" />
        </Fields>
        <Actions>
          <Push>确定</Push>
          <Push>取消</Push>
        </Actions>
      </DialogBody>
    </Dialog>
  );
};

/* ---------- input method bar ---------- */

const Ime = styled.div`
  position: absolute;
  right: 191px;
  top: 0;
  width: 207px;
  height: 27px;
  display: flex;
  align-items: center;
`;
const Orb = styled.i`
  position: absolute;
  left: 2px;
  top: -45px;
  width: 50px;
  height: 50px;
  border: 2px solid #9b9b9b;
  border-radius: 50%;
  background: #3cc45c;
`;
const ImeStrip = styled.div`
  position: relative;
  flex: 1;
  height: 23px;
  display: flex;
  align-items: center;
  gap: 4px;
  margin: 3px 0 0 8px;
  padding-left: 23px;
  border: 1px solid #a8bcd8;
  background: #fff;
  color: #1f6fc8;
`;
const ImeLogo = styled.svg`
  position: absolute;
  left: 0;
  top: 0;
`;
const ImeWord = styled.button`
  width: 18px;
  font: bold 15px/18px ${song};
`;

const SogouMark = () => (
  <>
    <path d="M2 5L24 1q2 0 2.500 2L28 22q0 2-2 2.500L8 27q-2 0-3-2L1 8q-.5-2 1-3z" fill="#f4511e" />
    <path d="M22 7C16 4.500 8.500 6 9 10.500c.5 3.500 12 2 12.500 6C22 20.500 13 22 8 19.500" fill="none" stroke="#fff" strokeWidth="3.400" />
  </>
);

const imeIcons: [string, React.ReactNode][] = [
  ["标点", <><circle cx="5" cy="6" r="1.800" fill="none" stroke="#1f6fc8" strokeWidth="1.400" /><path d="M11 9a2 2 0 114 1q0 3-3 4.500 1.500-2 1-3.500-2-.3-2-2z" fill="#1f6fc8" /></>],
  ["表情", <><circle cx="9" cy="9" r="7" fill="none" stroke="#1f6fc8" strokeWidth="1.800" /><path d="M6.500 6v2.500M11.500 6v2.500M5.500 10.500q3.500 4 7 0" fill="none" stroke="#1f6fc8" strokeWidth="1.500" /></>],
  ["语音", <><rect x="6" y="2" width="6" height="9" rx="3" fill="#1f6fc8" /><path d="M4 8q0 5 5 5t5-5M9 13v3M6 16h6" fill="none" stroke="#1f6fc8" strokeWidth="1.500" /></>],
  ["软键盘", <><rect x="1" y="3" width="16" height="12" rx="1" fill="#1f6fc8" /><path d="M3 6.500h12M3 9.500h12" stroke="#fff" strokeWidth="1.500" strokeDasharray="1.500 1" /><path d="M5 12.500h8" stroke="#fff" strokeWidth="1.500" /></>],
  ["登录", <><circle cx="7" cy="5" r="3" fill="#b9c6da" /><path d="M1 15q0-6 6-6t5 6z" fill="#b9c6da" /><path d="M9 10.500h3V13H9.500v2H12M14 10v4.500h3V10" fill="none" stroke="#8d9ebb" strokeWidth="1.300" /></>],
  ["皮肤", <path d="M6 2q3 2 6 0l5 3-2 4-2-1v8H5V8L3 9 1 5z" fill="#1f6fc8" />],
  ["工具箱", <><path d="M3 15L10 8" stroke="#1f6fc8" strokeWidth="3" strokeLinecap="round" /><path d="M14.500 2A4 4 0 1017 6.500L14 8l-2.500-2.500z" fill="#1f6fc8" /></>],
];

const InputMethod = () => (
  <Ime>
    <Orb />
    <ImeStrip>
      <ImeWord>中</ImeWord>
      {imeIcons.map(([name, body]) => (
        <button key={name} aria-label={name}>
          <svg width="18" height="18" viewBox="0 0 18 18">
            {body}
          </svg>
        </button>
      ))}
    </ImeStrip>
    <ImeLogo width="28" height="28" viewBox="0 0 29 28">
      <SogouMark />
    </ImeLogo>
  </Ime>
);

/* ---------- taskbar ---------- */

const TaskBar = styled.footer`
  height: 40px;
  flex: none;
  display: flex;
  color: #fff;
  background: #010b0f;
`;
const Start = styled.button`
  width: 48px;
  display: flex;
  align-items: center;
  justify-content: center;
  background: #000;
`;
const Cortana = styled.label`
  width: 344px;
  flex: none;
  display: flex;
  align-items: center;
  padding: 0 12px 0 9px;
  background: #333;
`;
const CortanaInput = styled.input`
  flex: 1;
  min-width: 0;
  margin-left: 5px;
  padding: 0;
  border: 0;
  outline: 0;
  background: none;
  font-size: 14px;
  &::placeholder {
    color: #9a9a9a;
    opacity: 1;
  }
`;
const Task = styled.button<{ $w?: number; $run?: boolean; $on?: boolean }>`
  width: ${(p) => p.$w ?? 39}px;
  flex: none;
  display: flex;
  align-items: center;
  justify-content: center;
  background:
    linear-gradient(#76b9ed, #76b9ed) no-repeat 50% 100% / ${(p) => (p.$on ? "100%" : "30px")} ${(p) => (p.$run ? "2px" : "0")},
    ${(p) => (p.$on ? "#333d40" : "none")};
`;
const Pins = styled.div`
  display: flex;
  margin-right: 4px;
`;
const Tray = styled.div`
  flex: 1;
  display: flex;
  align-items: center;
  justify-content: flex-end;
`;
const TrayText = styled.div<{ $w: number }>`
  width: ${(p) => p.$w}px;
  text-align: center;
  line-height: 18px;
`;
const TrayBtn = styled.button<{ $w: number }>`
  width: ${(p) => p.$w}px;
  display: flex;
  justify-content: center;
`;
const Edge = styled.i`
  width: 5px;
  height: 40px;
  margin-left: 9px;
  border-left: 1px solid #6a6a6a;
`;

const T = ({ children }: { children: React.ReactNode }) => (
  <svg width="24" height="24" viewBox="0 0 24 24" aria-hidden="true">
    {children}
  </svg>
);
const petal = "M12 12C8 13.500 2.500 12 2 8 1.500 3.500 4.500 1.500 8 1.500 12 1.500 13.500 7 12 12z";
const eBody = "M21 13H8.500c.3 3.800 3.500 5 6.500 4.500 2-.3 3.500-.9 5-1.800v3.500c-2 1.400-4.500 2-7.500 1.800-5-.4-8-3.500-8-8.500 0-5.500 3.800-9 8.500-9 5 0 8 3.500 8 9.500zM8.600 10.200h8c0-2-1.300-3.700-3.800-3.700-2.300 0-3.900 1.500-4.200 3.700z";
const swirl = "M21.500 4c-1.500 1.500-3.500 1-6 .5C8.500 3 3.500 7.500 3.500 13c0 5 4 8.500 9 8.500 4.500 0 8-3.300 8-7.500 0-3.600-2.800-6-6.200-6-3.200 0-5.800 2.300-5.800 5.200 0 2.600 2 4.300 4.300 4.300 1.900 0 3.200-1.200 3.200-3.300";
const bigG = "M22.500 2C20 4 18 2.500 14.500 2 7 1.500 2 6.500 2 13c0 6 4.500 9.500 10 9.500 6 0 10-4 10-9.500h-5c0 3-2 5-5 5s-5-2-5-5c0-3.500 3-6 7-5.500 4.500.5 8-2 8.500-5.500z";

const WindowsTaskBar = () => (
  <TaskBar>
    <Start aria-label="开始">
      <svg width="16" height="16" viewBox="0 0 16 16">
        <path d="M0 2.300L6.500 1.400v6.200H0zM7.300 1.300L16 0v7.600H7.300zM0 8.400h6.500v6.200L0 13.700zM7.300 8.400H16V16l-8.700-1.300z" fill="#fff" />
      </svg>
    </Start>
    <Cortana>
      <svg width="22" height="22" viewBox="0 0 22 22">
        <circle cx="11" cy="11" r="9" fill="none" stroke="#fff" strokeWidth="2.600" />
      </svg>
      <CortanaInput placeholder="在这里输入你要搜索的内容" aria-label="搜索" />
      <svg width="16" height="18" viewBox="0 0 16 18">
        <path d="M5.500 1.500h5v9h-5zM2.500 8v5.500h11V8M8 13.500v3M5.500 16.500h5" fill="none" stroke="#a0a0a0" />
      </svg>
    </Cortana>
    <Task $w={48} aria-label="任务视图">
      <svg width="22" height="16" viewBox="0 0 22 16">
        <path d="M5.500 1.500h11v13h-11zM3.500 3.500h-2v9h2M18.500 3.500h2v9h-2" fill="none" stroke="#fff" strokeWidth="1.200" />
      </svg>
    </Task>
    <Pins>
      <Task $w={51} aria-label="浏览器">
        <T>
          {[0, 72, 144, 216, 288].map((a) => (
            <path key={a} d={petal} fill="#e6e6e6" transform={`rotate(${a} 12 12)`} stroke="#010b0f" strokeWidth=".8" />
          ))}
        </T>
      </Task>
      <Task $w={51} aria-label="网页">
        <T>
          <path d={eBody} fill="#e6e6e6" />
          <path d="M3 21c-3-4 5-14 12-17 4-2 7-2 6 1" fill="none" stroke="#e6e6e6" strokeWidth="1.500" />
        </T>
      </Task>
      <Task $w={51} aria-label="广联达">
        <T>
          <path d={swirl} fill="none" stroke="#d8d8d8" strokeWidth="1.200" transform="translate(2 2) scale(.85)" />
        </T>
      </Task>
    </Pins>
    <Task aria-label="Edge">
      <T>
        <path d="M2 11C3 5 7 2 12 2c6 0 9.500 4 9.500 9v2.500H8.500c.3 3 3 4.500 6 4.500 2.300 0 4-.6 5.800-1.600v4.200c-2 1-4.200 1.500-7 1.500-6 0-9.600-3.500-9.600-8.300 0-3.300 2-5.800 4.800-7C5 7.300 3 8.700 2 11zM8.700 9.800h7.500c0-2-1.300-3.300-3.500-3.300s-3.700 1.300-4 3.300z" fill="#0f7bdc" />
      </T>
    </Task>
    <Task aria-label="Internet Explorer">
      <T>
        <path d={eBody} fill="#4ab0f0" />
        <path d="M2.500 22C-1 18 7 7 14 3.500c5-2.700 9-2.500 7.500 2" fill="none" stroke="#f4c52c" strokeWidth="2" />
      </T>
    </Task>
    <Task aria-label="文件资源管理器">
      <T>
        <path d="M1.500 4h8l1.500 2h11.500v14h-21z" fill="#f7d774" />
        <path d="M1.500 8h21v12h-21z" fill="#ffe9a3" />
        <path d="M5.500 21v-7h13v7h-3.500v-4h-6v4z" fill="#3a9fe0" />
      </T>
    </Task>
    <Task $run aria-label="安全浏览器">
      <T>
        <circle cx="12" cy="12" r="10.500" fill="#6cc02c" />
        <path d={eBody} fill="#fff" transform="translate(2.500 2.500) scale(.78)" />
        <path d="M3 21C0 17 9 6 15 3c4-2 7-1.500 6.500 1" fill="none" stroke="#3f9c1c" strokeWidth="1.500" />
      </T>
    </Task>
    <Task $run aria-label="广联达云">
      <T>
        <path d={bigG} fill="#1a9df0" />
      </T>
    </Task>
    <Task $run $on aria-label="钢筋算量">
      <Icon name="app" size={24} />
    </Task>
    <Task $run aria-label="编辑器">
      <T>
        <rect width="24" height="24" rx="3" fill="#f29a24" />
        <path d="M3 6l13-2 3 14-14 3z" fill="#fffdf2" />
        <path d="M6 9l8-1M6.500 12l7-1M7 15l5-.7" stroke="#8a6a4a" />
        <path d="M12 15l8-12 2 1.500-8 12-3 1.500z" fill="#b8451c" stroke="#5c220c" strokeWidth=".6" />
      </T>
    </Task>
    <Task $run aria-label="S 工具">
      <T>
        <path d="M0 0h24v20H0z" fill="#ffcb05" />
        <path d="M0 18q6-3 12 2t12 0v4H0z" fill="#010b0f" />
        <path d="M9 18q6 4 13 1-1 5-6 5-5 0-7-6z" fill="#e02020" />
        <path d="M18.500 3.500H9.500Q6.500 4 7 6.500T12.500 9q4 .5 3.500 3.200T12 14.500H5" fill="none" stroke="#222" strokeWidth="3.500" />
      </T>
    </Task>
    <Tray>
      <TrayText $w={36}>链接</TrayText>
      <TrayText $w={78}>
        24%
        <br />
        CPU使用
      </TrayText>
      <TrayBtn $w={22} aria-label="显示隐藏的图标">
        <svg width="12" height="8" viewBox="0 0 12 8">
          <path d="M.5 7L6 1.500 11.500 7" fill="none" stroke="#fff" strokeWidth="1.200" />
        </svg>
      </TrayBtn>
      <TrayBtn $w={26} aria-label="提醒">
        <svg width="14" height="14" viewBox="0 0 14 14">
          <path d="M7 1C4 1 3 3 3 6s-1 3-2 5h12c-1-2-2-2-2-5s-1-5-4-5zM5.500 12h3v1.500h-3z" fill="#fff" stroke="#fff" strokeWidth=".6" />
        </svg>
      </TrayBtn>
      <TrayBtn $w={24} aria-label="电池">
        <svg width="16" height="10" viewBox="0 0 16 10">
          <path d="M.5.5h12v9H.5zM14 3v4" fill="none" stroke="#fff" strokeWidth="1.300" />
          <path d="M2.500 2.500h6v5h-6z" fill="#fff" />
        </svg>
      </TrayBtn>
      <TrayBtn $w={25} aria-label="网络">
        <svg width="14" height="14" viewBox="0 0 14 14">
          <path d="M1 13C1 6 6 1 13 1M4 13c0-5 4-9 9-9M7 13c0-3.500 2.500-6 6-6" fill="none" stroke="#aab0b2" strokeWidth="1.200" />
          <path d="M10 13c0-2 1.200-3 3-3v3z" fill="#fff" />
        </svg>
      </TrayBtn>
      <TrayBtn $w={21} aria-label="音量">
        <svg width="16" height="14" viewBox="0 0 16 14">
          <path d="M.5 4.500H3l3.500-3.500v12L3 9.500H.5z" fill="none" stroke="#fff" />
          <path d="M8.500 4.500q2 2.500 0 5" fill="none" stroke="#fff" />
          <path d="M10.500 2.500q3.500 4.500 0 9M13 1q4 6 0 12" fill="none" stroke="#8a9092" />
        </svg>
      </TrayBtn>
      <TrayBtn $w={34} aria-label="触摸键盘">
        <svg width="23" height="14" viewBox="0 0 23 14">
          <path d="M.5.5h22v12.500H.5z" fill="none" stroke="#fff" strokeWidth="1.200" />
          <path d="M3 4h17M3 6.500h17" stroke="#fff" strokeWidth="1.200" strokeDasharray="1.500 1" />
          <path d="M5 9.500h13" stroke="#fff" strokeWidth="1.200" />
        </svg>
      </TrayBtn>
      <TrayText $w={24}>中</TrayText>
      <TrayBtn $w={32} aria-label="搜狗输入法">
        <svg width="16" height="16" viewBox="0 0 29 28">
          <SogouMark />
        </svg>
      </TrayBtn>
      <TrayText $w={76}>
        13:06
        <br />
        2018/7/21
      </TrayText>
      <TrayBtn $w={38} aria-label="通知">
        <svg width="17" height="17" viewBox="0 0 17 17">
          <path d="M.5 1.500h16v11H11L8.500 15.500 6 12.500H.5z" fill="none" stroke="#fff" strokeWidth="1.200" />
        </svg>
      </TrayBtn>
      <Edge />
    </Tray>
  </TaskBar>
);

/* ---------- page ---------- */

const menus = ["文件(F)", "编辑(E)", "楼层(L)", "构件(N)", "绘图(D)", "修改(M)", "钢筋量(Q)", "视图(V)", "工具(T)", "云应用(Y)", "BIM应用(I)", "在线服务(S)", "帮助(H)", "版本号(B)"];

const Quick = styled.button<{ $gap: number }>`
  margin-right: ${(p) => p.$gap}px;
  flex: none;
`;

const MainStatus = styled(StatusRow)`
  padding-top: 2px;
  background: #fafafa;
  font-family: ${song};
`;

export default function App() {
  return (
    <>
      <GlobalStyle />
      <Shell>
        <TitleBar>
          <Icon name="app" />
          <TitleText>
            <Mixed as={Wide} text="广联达BIM钢筋算量软件 GGJ2013 - [C:\Users\Administrator.PC-20141127NRHM\Desktop\白龙村-2018-02-02-19-24-35(2666版).GGJ12]" />
          </TitleText>
          <Caption aria-label="最小化">
            <svg width="10" height="10" viewBox="0 0 10 10">
              <path d="M0 5.500h10" stroke="#808080" />
            </svg>
          </Caption>
          <Caption aria-label="还原">
            <svg width="10" height="10" viewBox="0 0 10 10">
              <path d="M.5 2.500h7v7h-7zM2.500 2V.5h7v7H8" stroke="#808080" fill="none" />
            </svg>
          </Caption>
          <Caption aria-label="关闭">
            <svg width="10" height="10" viewBox="0 0 10 10">
              <path d="M0 0l10 10M10 0L0 10" stroke="#808080" />
            </svg>
          </Caption>
        </TitleBar>

        <MenuBar>
          {menus.map((m) => (
            <MenuItem key={m} $gap={m === "版本号(B)" ? 6 : 12}>
              {m}
            </MenuItem>
          ))}
          <MenuItem $gap={8}>
            <Icon name="change" />
            新建变更
            <Caret />
          </MenuItem>
          <MenuItem $gap={7}>
            <Icon name="mascot" />
            广小二
          </MenuItem>
          <MenuBlank />
          <Account>
            <Icon name="user" />
            <span>13907298339</span>
            <Caret />
            <Beans>造价豆:0</Beans>
            <Icon name="bell" />
            <More label="更多账户选项" />
          </Account>
        </MenuBar>

        <Bar>
          <Group $w={153}>
            <Quick $gap={7} aria-label="新建">
              <Icon name="newFile" />
            </Quick>
            <Quick $gap={5} aria-label="打开">
              <Icon name="open" />
            </Quick>
            <QuickCaret />
            <Quick $gap={6} aria-label="保存">
              <Icon name="save" />
            </Quick>
            <Sep />
            <Quick $gap={5} aria-label="撤销">
              <Icon name="undo" />
            </Quick>
            <QuickCaret />
            <More label="更多快捷工具" />
          </Group>
          <Group $w={551}>
            <Tool icon="paint" text="绘图" />
            <Tool icon="sigma" text="汇总计算" />
            <Tool icon="cloud" text="云检查" />
            <Tool icon="align" text="平齐板顶" off />
            <Tool icon="binoc" text="查找图元" off />
            <Tool icon="glasses" text="查看钢筋量" off />
            <Tool icon="batch" text="批量选择" off />
            <More label="更多工具" />
          </Group>
          <ViewGroup>
            <ViewPick>
              <Icon name="plane" />
              <PlainSelect aria-label="视图模式">
                <option>二维</option>
              </PlainSelect>
              <Caret $w={9} $off />
            </ViewPick>
            <Tool icon="cube" text="俯视" off caret={12} />
            <Tool icon="orbit" text="动态观察" off />
            <Tool icon="local3d" text="局部三维" off />
            <Sep />
            <Tool icon="full" text="全屏" off />
            <Tool icon="zoom" text="缩放" off caret={12} />
            <Tool icon="pan" text="平移" off caret={12} />
            <Tool icon="rotate" text="屏幕旋转" off caret={8} />
            <Sep />
            <Tool icon="floors" text="选择楼层" off />
            <More label="更多视图工具" />
          </ViewGroup>
        </Bar>

        <Main>
          <Navigation />
          <ComponentList />
          <Backdrop>
            <BackdropPane>
              <Track>
                <Chevron d={DOWN} />
              </Track>
            </BackdropPane>
          </Backdrop>
          <SectionEditor />
        </Main>

        <MainStatus>
          <SongCell $w={148} />
          <SongCell $w={78}>
            <Mixed text="层高:2.15m" />
          </SongCell>
          <SongCell $w={98}>
            <Mixed text="底标高:-2.2m" />
          </SongCell>
          <SongCell $w={48}>
            <Mixed text="0" />
          </SongCell>
          <SongCell>在此处选择后浇带的类型。</SongCell>
          <SongCell $w={70}>
            <Mixed text="209.6 FPS" />
          </SongCell>
        </MainStatus>

        <WindowsTaskBar />
        <GridDialog />
        <InputMethod />
      </Shell>
    </>
  );
}
